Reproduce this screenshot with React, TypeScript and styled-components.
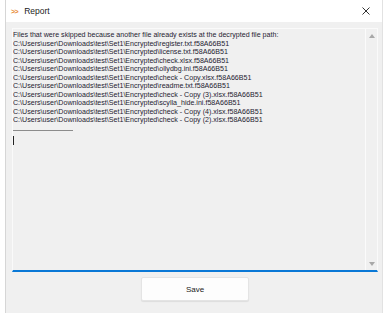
import React from 'react';
import styled, { createGlobalStyle } from 'styled-components';

const GlobalStyle = createGlobalStyle`
  html, body {
    margin: 0;
    padding: 0;
    background: #ffffff;
    font-family: "Liberation Sans", Arial, sans-serif;
  }
`;

const Window = styled.div`
  margin-left: 5px;
  width: 378px;
  height: 313px;
  display: flex;
  flex-direction: column;
  border-left: 1px solid #d6d6d6;
  border-right: 1px solid #e2e2e2;
  box-sizing: border-box;
  background: #f0f0f0;
`;

const TitleBar = styled.div`
  height: 22px;
  flex: none;
  background: #ffffff;
  display: flex;
  align-items: center;
  padding: 0 0 0 5px;
  font-size: 8.5px;
  color: #1a1a1a;
`;

const Chevrons = styled.span`
  color: #e8862e;
  font-weight: bold;
  font-size: 7px;
  letter-spacing: -0.5px;
  margin-right: 6px;
`;

const Title = styled.span`
  flex: 1;
`;

const Close = styled.button`
  width: 24px;
  height: 22px;
  border: 0;
  background: transparent;
  display: flex;
  align-items: center;
  justify-content: center;
  padding: 0;
  margin-right: 4px;
`;

const Body = styled.div`
  flex: 1;
  display: flex;
  flex-direction: column;
  padding: 6px 4px 0 6px;
`;

const TextBox = styled.div`
  height: 244px;
  box-sizing: border-box;
  display: flex;
  border: 1px solid #fafafa;
  border-bottom: 2px solid #0a78d6;
  background: #f0f0f0;
`;

const Content = styled.div`
  flex: 1;
  padding: 2px 0 0 0;
  font-size: 7.1px;
  line-height: 8.55px;
  color: #1f2330;
  white-space: pre;
  overflow: hidden;
`;

const Line = styled.div``;

const Separator = styled.div`
  width: 60px;
  margin-top: 5px;
  border-top: 1px solid #8c8c8c;
`;

const Caret = styled.div`
  width: 1px;
  height: 9px;
  margin-top: 5px;
  background: #222222;
`;

const ScrollBar = styled.div`
  width: 11px;
  flex: none;
  border-left: 1px solid #fbfbfb;
  display: flex;
  flex-direction: column;
  justify-content: space-between;
  align-items: center;
  padding: 5px 0 4px;
`;

const Arrow = styled.div<{ $down?: boolean }>`
  width: 0;
  height: 0;
  border-left: 3px solid transparent;
  border-right: 3px solid transparent;
  ${(p) => (p.$down ? 'border-top: 4px solid #a8a8a8;' : 'border-bottom: 4px solid #a8a8a8;')}
`;

const Footer = styled.div`
  display: flex;
  justify-content: center;
  padding-top: 5px;
`;

const SaveButton = styled.button`
  width: 108px;
  height: 24px;
  background: #fdfdfd;
  border: 1px solid #e4e4e4;
  border-radius: 2px;
  box-shadow: 0 1px 1px rgba(0, 0, 0, 0.08);
  font-family: "Liberation Sans", Arial, sans-serif;
  font-size: 8px;
  color: #1a1a1a;
`;

const base = 'C:\\Users\\user\\Downloads\\test\\Set1\\Encrypted\\';

const files = [
  'register.txt.f58A66B51',
  'license.txt.f58A66B51',
  'check.xlsx.f58A66B51',
  'ollydbg.ini.f58A66B51',
  'check - Copy.xlsx.f58A66B51',
  'readme.txt.f58A66B51',
  'check - Copy (3).xlsx.f58A66B51',
  'scylla_hide.ini.f58A66B51',
  'check - Copy (4).xlsx.f58A66B51',
  'check - Copy (2).xlsx.f58A66B51',
];

const App: React.FC = () => {
  return (
    <>
      <GlobalStyle />
      <Window>
        <TitleBar>
          <Chevrons>&gt;&gt;</Chevrons>
          <Title>Report</Title>
          <Close aria-label="Close">
            <svg width="8" height="8" viewBox="0 0 8 8">
              <path d="M0.5 0.5 L7.5 7.5 M7.5 0.5 L0.5 7.5" stroke="#333" strokeWidth="1" />
            </svg>
          </Close>
        </TitleBar>
        <Body>
          <TextBox>
            <Content>
              <Line>Files that were skipped because another file already exists at the decrypted file path:</Line>
              {files.map((f) => (
                <Line key={f}>{base + f}</Line>
              ))}
              <Separator />
              <Caret />
            </Content>
            <ScrollBar>
              <Arrow />
              <Arrow $down />
            </ScrollBar>
          </TextBox>
          <Footer>
            <SaveButton>Save</SaveButton>
          </Footer>
        </Body>
      </Window>
    </>
  );
};

export default App;
